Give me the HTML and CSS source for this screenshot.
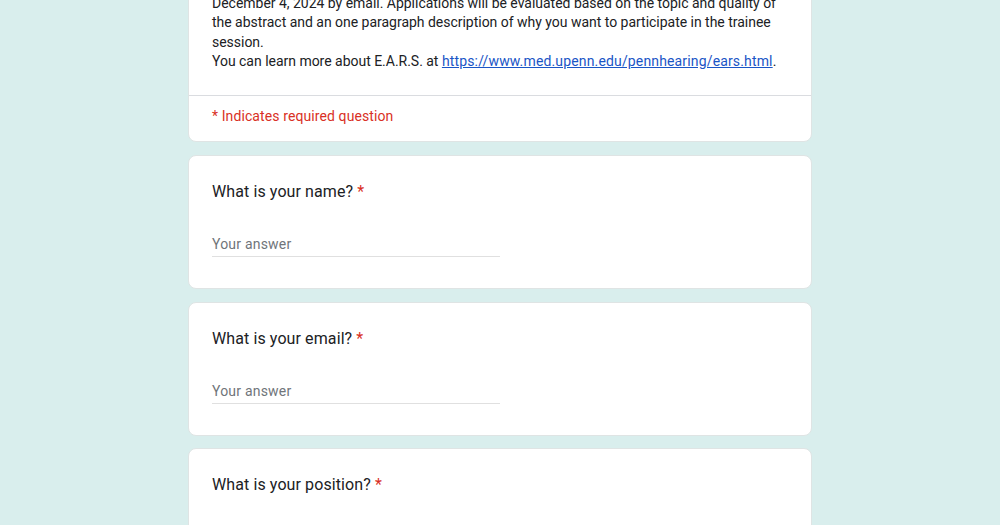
FILE: index.html
```html
<!DOCTYPE html>
<html lang="en">
<head>
<meta charset="utf-8">
<title>E.A.R.S. Trainee Session</title>
<link rel="stylesheet" href="styles.css">
</head>
<body>
<main class="form">
  <section class="card intro">
    <div class="desc">
      <p>December 4, 2024 by email. Applications will be evaluated based on the topic and quality of the abstract and an one paragraph description of why you want to participate in the trainee session.</p>
      <p>You can learn more about E.A.R.S. at <a href="#">https://www.med.upenn.edu/pennhearing/ears.html</a>.</p>
    </div>
    <div class="required-note">* Indicates required question</div>
  </section>

  <section class="card question">
    <div class="q-title">What is your name? <span class="star">*</span></div>
    <div class="answer">Your answer</div>
  </section>

  <section class="card question">
    <div class="q-title">What is your email? <span class="star">*</span></div>
    <div class="answer">Your answer</div>
  </section>

  <section class="card question">
    <div class="q-title">What is your position? <span class="star">*</span></div>
  </section>
</main>
</body>
</html>
```

FILE: styles.css
```css
html, body {
  margin: 0;
  padding: 0;
}
body {
  background: #d9eeed;
  font-family: Roboto, "Liberation Sans", Arial, sans-serif;
  color: #202124;
  height: 525px;
  overflow: hidden;
}
.form {
  width: 624px;
  margin: -31px auto 0;
  display: flex;
  flex-direction: column;
  gap: 12.7px;
}
.card {
  background: #ffffff;
  border: 1px solid #dfe4e4;
  border-radius: 8px;
  box-sizing: border-box;
}
.intro .desc {
  padding: 24px 23px 24px;
  font-size: 14px;
  line-height: 19.3px;
  letter-spacing: -0.02px;
}
.intro .desc p {
  margin: 0;
}
.intro a {
  color: #1a55c6;
  text-decoration: underline;
  letter-spacing: 0.15px;
}
.required-note {
  border-top: 1px solid #dadce0;
  padding: 11px 23px 15px;
  font-size: 14px;
  line-height: 19px;
  color: #d93025;
  letter-spacing: 0.1px;
}
.question {
  padding: 24px 23px 0;
  height: 134px;
}
.q-title {
  font-size: 16px;
  line-height: 24px;
  letter-spacing: 0.1px;
}
.star {
  color: #d93025;
}
.answer {
  margin-top: 30px;
  width: 288px;
  font-size: 14px;
  line-height: 20px;
  color: #70757a;
  letter-spacing: 0.2px;
  padding-bottom: 2px;
  border-bottom: 1px solid #e0e0e0;
}
```
